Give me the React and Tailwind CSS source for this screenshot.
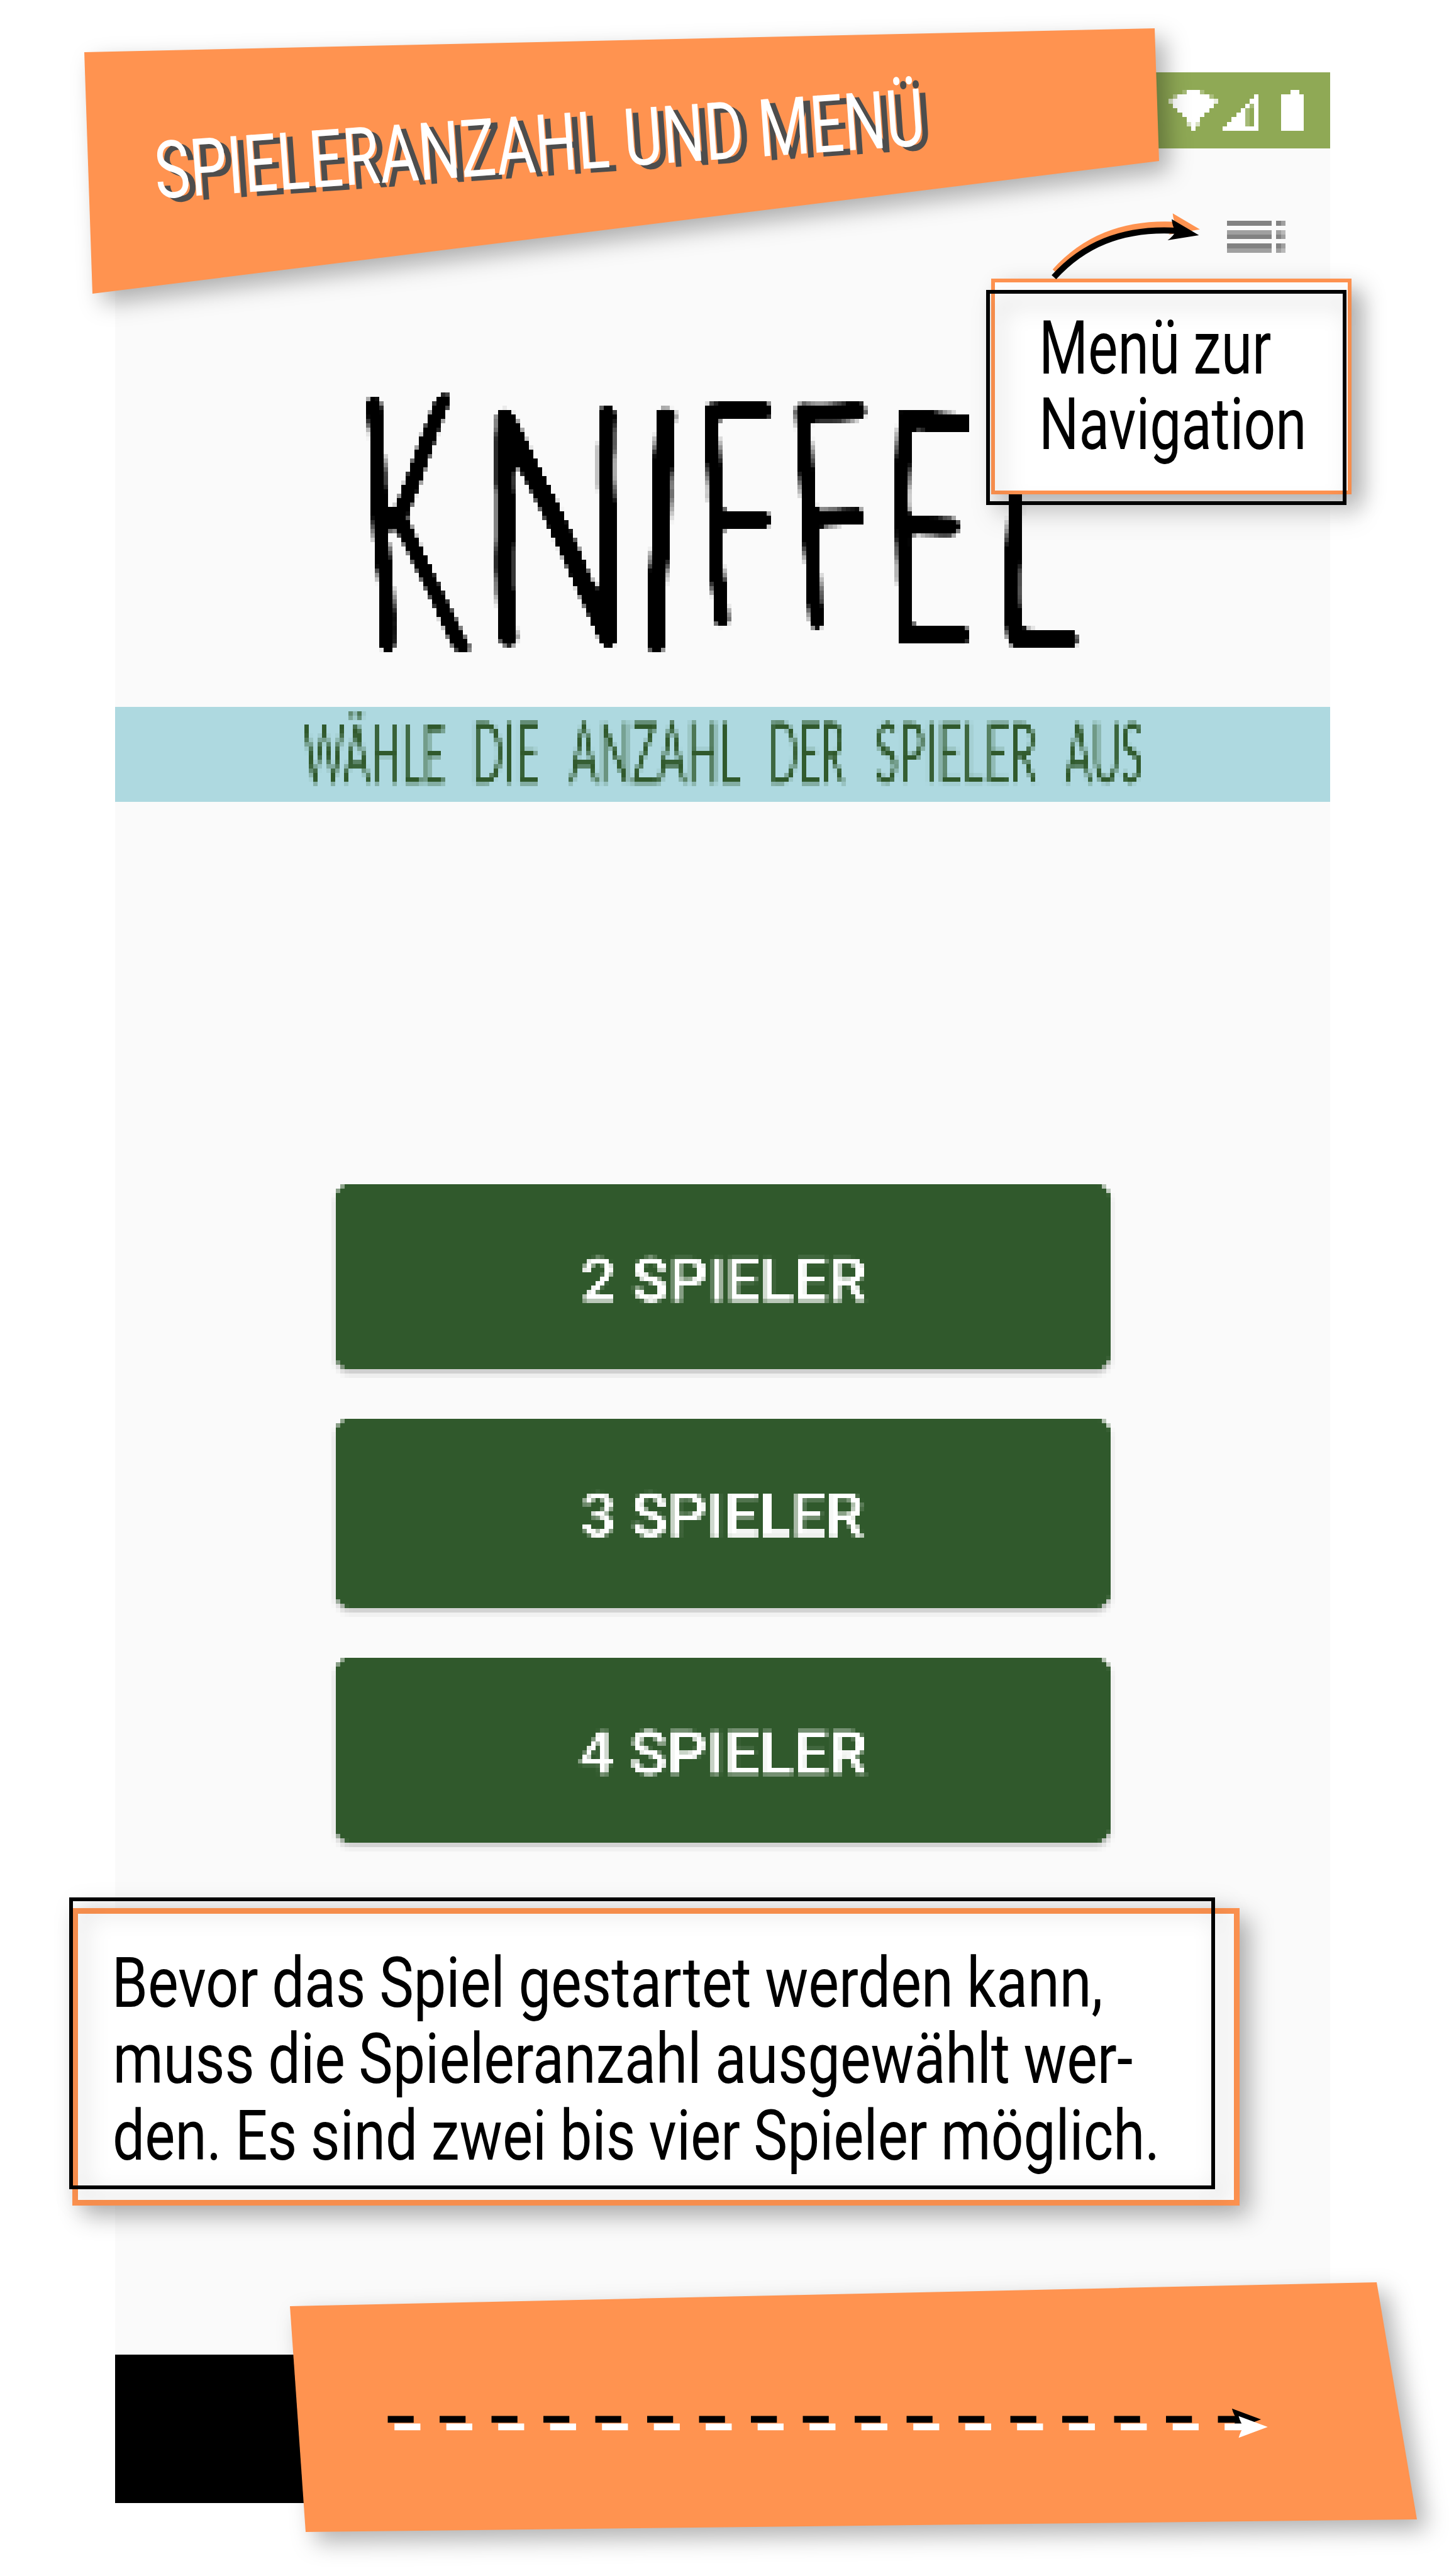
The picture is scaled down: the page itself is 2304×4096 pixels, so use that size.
import { useLayoutEffect, useRef } from "react";

// One line of text whose ink is stretched to fill its box exactly.
function FitText({ children, className = "", textClass = "" }) {
  const box = useRef(null);
  const line = useRef(null);

  useLayoutEffect(() => {
    const el = line.current;
    const style = getComputedStyle(el);
    const size = parseFloat(style.fontSize);
    const ctx = document.createElement("canvas").getContext("2d");
    ctx.font = `${style.fontWeight} ${style.fontSize} ${style.fontFamily}`;
    ctx.wordSpacing = style.wordSpacing;
    const m = ctx.measureText(children);
    const ascent = m.fontBoundingBoxAscent;
    const descent = m.fontBoundingBoxDescent;
    const baseline = (size - ascent - descent) / 2 + ascent;
    const sx = box.current.offsetWidth / (m.actualBoundingBoxLeft + m.actualBoundingBoxRight);
    const sy = box.current.offsetHeight / (m.actualBoundingBoxAscent + m.actualBoundingBoxDescent);
    const tx = m.actualBoundingBoxLeft * sx;
    const ty = (m.actualBoundingBoxAscent - baseline) * sy;
    el.style.transform = `matrix(${sx}, 0, 0, ${sy}, ${tx}, ${ty})`;
  }, [children]);

  return (
    <span ref={box} className={`block shrink-0 ${className}`}>
      <span
        ref={line}
        className={`block w-max origin-top-left whitespace-pre leading-none ${textClass}`}
      >
        {children}
      </span>
    </span>
  );
}

// Filters for the low-resolution phone screen: "pixels" samples the element on
// a 7px grid, "marker" also makes the strokes wavy and rounds off their ends.
function ScreenFilters() {
  return (
    <svg className="absolute h-0 w-0" aria-hidden="true">
      <defs>
        <filter id="pixels" colorInterpolationFilters="sRGB">
          <feGaussianBlur in="SourceGraphic" stdDeviation="1" result="soft" />
          <feFlood x="3" y="3" width="1" height="1" floodColor="#000" />
          <feOffset x="0" y="0" width="7" height="7" dx="0" dy="0" />
          <feTile result="grid" />
          <feComposite in="soft" in2="grid" operator="in" />
          <feMorphology operator="dilate" radius="3" />
        </filter>
        <filter id="marker" colorInterpolationFilters="sRGB">
          <feTurbulence type="fractalNoise" baseFrequency="0.006" numOctaves="1" seed="4" result="noise" />
          <feDisplacementMap in="SourceGraphic" in2="noise" scale="22" xChannelSelector="R" yChannelSelector="G" />
          <feGaussianBlur stdDeviation="6" />
          <feComponentTransfer result="round">
            <feFuncA type="linear" slope="5" intercept="-1.7" />
          </feComponentTransfer>
          <feFlood x="3" y="3" width="1" height="1" floodColor="#000" />
          <feOffset x="0" y="0" width="7" height="7" dx="0" dy="0" />
          <feTile result="grid" />
          <feComposite in="round" in2="grid" operator="in" />
          <feMorphology operator="dilate" radius="3" />
        </filter>
      </defs>
    </svg>
  );
}

const white = [
  // wifi
  [4, 0, 3, 1], [2, 1, 7, 1], [1, 2, 9, 2], [2, 4, 7, 1], [3, 5, 5, 1], [4, 6, 3, 1], [5, 7, 1, 2],
  // signal
  [19, 1, 1, 8], [18, 2, 1, 1], [17, 3, 1, 1], [16, 4, 1, 4], [15, 5, 1, 3], [14, 6, 1, 2], [13, 7, 1, 1], [12, 8, 7, 1],
  // battery
  [27, 0, 2, 1], [25, 1, 5, 8],
];
const faint = [
  [3, 0, 1, 1, 0.2], [7, 0, 1, 1, 0.25], [1, 1, 1, 1, 0.35], [9, 1, 1, 1, 0.25], [0, 2, 1, 1, 0.65], [10, 2, 1, 1, 0.8],
  [4, 7, 1, 1, 0.65], [6, 7, 1, 1, 0.65], [18, 3, 1, 1, 0.2], [17, 4, 1, 4, 0.2],
];

function StatusIcons() {
  return (
    <svg className="h-[65px] w-[215px]" viewBox="0 0 30 9" preserveAspectRatio="none" shapeRendering="crispEdges" fill="#fff">
      {white.map(([x, y, w, h]) => (
        <rect key={`${x}-${y}`} x={x} y={y} width={w} height={h} />
      ))}
      {faint.map(([x, y, w, h, o]) => (
        <rect key={`${x}-${y}`} x={x} y={y} width={w} height={h} opacity={o} />
      ))}
    </svg>
  );
}

function MenuIcon() {
  const rows = [
    [0, 10, 0],
    [19.4, 9.3, 1],
    [28.7, 9.4, 0],
    [46.9, 10, 0],
    [56.9, 9.2, 1],
  ];
  const shades = ["#828282", "#a0a0a0", "#b9b9b9"];
  return (
    <svg className="h-[51px] w-[93px]" viewBox="0 0 121.1 66.1" preserveAspectRatio="none" shapeRendering="crispEdges">
      {rows.map(([y, h, s]) => (
        <g key={y}>
          <rect x="0" y={y} width="93" height={h} fill={shades[s]} />
          <rect x="102.2" y={y} width="9.5" height={h} fill={shades[s]} />
          <rect x="111.7" y={y} width="9.4" height={h} fill={shades[s + 1]} />
        </g>
      ))}
    </svg>
  );
}

const letters = [
  { c: "K", cls: "w-[144px] h-[407px] origin-top skew-x-[3.5deg]" },
  { c: "N", cls: "ml-[71px] mt-[22px] w-[177px] h-[378px]" },
  { c: "I", cls: "ml-[53px] mt-[22px] w-[28px] h-[385px] origin-bottom skew-x-[-2.2deg]" },
  { c: "F", cls: "ml-[63px] mt-[14px] w-[106px] h-[358px] origin-top skew-x-[3.5deg]" },
  { c: "F", cls: "ml-[43px] mt-[14px] w-[106px] h-[358px] origin-top skew-x-[3.5deg]" },
  { c: "E", cls: "ml-[58px] mt-[28px] w-[106px] h-[372px]" },
  { c: "L", cls: "ml-[66px] mt-[22px] w-[106px] h-[378px]" },
];

const words = [
  { t: "WÄHLE", cls: "w-[222px] h-[115px]" },
  { t: "DIE", cls: "ml-[50px] w-[101px] h-[98px]" },
  { t: "ANZAHL", cls: "ml-[49px] w-[273px] h-[98px]" },
  { t: "DER", cls: "ml-[50px] w-[115px] h-[98px]" },
  { t: "SPIELER", cls: "ml-[50px] w-[256px] h-[98px]" },
  { t: "AUS", cls: "ml-[44px] w-[121px] h-[98px]" },
];

function PlayerButton({ children, className, labelClass }) {
  return (
    <button
      type="button"
      className={`flex w-[1231px] items-center rounded-[22px] bg-[#30592c] text-white shadow-[0_7px_10px_rgba(0,0,0,0.22)] [filter:url(#pixels)] ${className}`}
    >
      <FitText className={labelClass} textClass="font-['Roboto',sans-serif] text-[100px] font-semibold">
        {children}
      </FitText>
    </button>
  );
}

function Phone() {
  return (
    <div className="flex h-[3865px] w-[1932px] flex-col bg-[#fafafa]">
      <div className="flex h-[121px] shrink-0 items-center justify-end bg-[#8fa955] pr-[42px]">
        <StatusIcons />
      </div>
      <div className="flex shrink-0 justify-end pr-[71px] pt-[115px]">
        <MenuIcon />
      </div>
      <h1
        className="mt-[222px] flex h-[407px] shrink-0 items-start pl-[398px] text-black [filter:url(#marker)]"
        aria-label="KNIFFEL"
      >
        {letters.map(({ c, cls }, i) => (
          <FitText
            key={i}
            className={cls}
            textClass={
              c === "I"
                ? "font-['Lato',sans-serif] text-[530px] font-light [-webkit-text-stroke:6px_#000]"
                : "font-['Lato',sans-serif] text-[530px] font-light [-webkit-text-stroke:6px_#000] [text-shadow:10px_0_0_#000,-10px_0_0_#000]"
            }
          >
            {c}
          </FitText>
        ))}
      </h1>
      <div className="mt-[93px] flex h-[151px] shrink-0 bg-[#aed9e0] text-[#30592c]">
        <div className="flex w-full items-end pb-[29px] pl-[300px] [filter:url(#pixels)]">
          {words.map(({ t, cls }) => (
            <FitText key={t} className={cls} textClass="font-['Lato',sans-serif] text-[136px] font-normal">
              {t}
            </FitText>
          ))}
        </div>
      </div>
      <div className="mt-[608px] flex flex-col pl-[351px]">
        <PlayerButton className="h-[294px]" labelClass="ml-[393px] mt-[7px] h-[72px] w-[450px]">
          2 SPIELER
        </PlayerButton>
        <PlayerButton className="mt-[79px] h-[300px]" labelClass="ml-[393px] mt-[4px] h-[71px] w-[446px]">
          3 SPIELER
        </PlayerButton>
        <PlayerButton className="mt-[80px] h-[293px]" labelClass="ml-[388px] mt-[6px] h-[72px] w-[456px]">
          4 SPIELER
        </PlayerButton>
      </div>
      <div className="mt-auto h-[236px] shrink-0 bg-black" />
    </div>
  );
}

function TitleBanner() {
  return (
    <header className="absolute left-[134px] top-[45px] h-[422px] w-[1709px] drop-shadow-[16px_16px_18px_rgba(0,0,0,0.3)]">
      <div className="h-full w-full bg-[#ff9350] pl-[118px] pt-[159px] [clip-path:polygon(0px_38px,1702px_0px,1709px_211px,13px_422px)]">
        <FitText
          className="h-[113px] w-[1218px] origin-bottom-left rotate-[-3.98deg] text-white"
          textClass="font-['Roboto',sans-serif] text-[124px] font-normal [text-shadow:14px_7px_0_#4d4d4d]"
        >
          SPIELERANZAHL UND MENÜ
        </FitText>
      </div>
    </header>
  );
}

function CurvedArrow() {
  const shape = (
    <>
      <path d="M2182 574C2240 510 2320 470 2440 478" fill="none" strokeWidth="12.6" />
      <path d="M2482.3 486.9L2426 453.8Q2427 468 2434 479Q2429 489 2417.4 497.5Z" stroke="none" />
    </>
  );
  return (
    <svg className="absolute left-[1667px] top-[338px] h-[108px] w-[246px]" viewBox="2170.6 440.1 320.3 140.6">
      <g stroke="#ff9350" fill="#ff9350" transform="translate(2 -12)">{shape}</g>
      <g stroke="#000" fill="#000">{shape}</g>
    </svg>
  );
}

const calloutText = "font-['Roboto',sans-serif] text-[114px] font-normal [word-spacing:-1.5px]";

function MenuCallout() {
  return (
    <aside className="absolute left-[1568px] top-[443px] h-[360px] w-[581px] text-black">
      <div className="ml-[8px] h-[343px] w-[573px] border-[6px] border-[#ff9350] bg-white pl-[77px] pt-[60px] shadow-[16px_16px_36px_rgba(0,0,0,0.3)]">
        <FitText className="h-[86px] w-[361px]" textClass={calloutText}>Menü zur</FitText>
        <FitText className="mt-[36px] h-[107px] w-[413px]" textClass={calloutText}>Navigation</FitText>
      </div>
      <div className="absolute left-0 top-[18px] h-[342px] w-[573px] border-[6px] border-black drop-shadow-[16px_16px_18px_rgba(0,0,0,0.3)]" />
    </aside>
  );
}

function PlayersCallout() {
  return (
    <aside className="absolute left-[110px] top-[3017px] h-[490px] w-[1861px] pl-[5px] pt-[17px] text-black">
      <div className="h-[473px] w-[1856px] border-[9px] border-[#ff9350] bg-white pl-[59px] pt-[64px] shadow-[16px_16px_36px_rgba(0,0,0,0.3)]">
        <FitText className="ml-[2px] h-[107px] w-[1565px]" textClass={calloutText}>
          Bevor das Spiel gestartet werden kann,
        </FitText>
        <FitText className="ml-[2px] mt-[14px] h-[107px] w-[1615px]" textClass={calloutText}>
          muss die Spieleranzahl ausgewählt wer-
        </FitText>
        <FitText className="mt-[15px] h-[107px] w-[1654px]" textClass={calloutText}>
          den. Es sind zwei bis vier Spieler möglich.
        </FitText>
      </div>
      <div className="absolute left-0 top-0 h-[464px] w-[1822px] border-[6px] border-black drop-shadow-[16px_16px_18px_rgba(0,0,0,0.3)]" />
    </aside>
  );
}

function DashedArrow() {
  const shape = (
    <>
      <path d="M802.7 5009.3H2574" strokeWidth="14" strokeDasharray="53.7 53.72" fill="none" />
      <path d="M2610.7 5009.5L2550.5 4987Q2554 5000 2561 5009.5Q2554 5019 2550.5 5032Z" stroke="none" />
    </>
  );
  return (
    <svg className="h-[49px] w-[1402px]" viewBox="802 4986 1825.5 63.8">
      <g stroke="#000" fill="#000">{shape}</g>
      <g stroke="#fff" fill="#fff" transform="translate(13.9 15.6)">{shape}</g>
    </svg>
  );
}

function NextBanner() {
  return (
    <footer className="absolute left-[461px] top-[3629px] h-[397px] w-[1792px] drop-shadow-[16px_16px_18px_rgba(0,0,0,0.3)]">
      <div className="h-full w-full bg-[#ff9350] pl-[155px] pt-[200px] [clip-path:polygon(0px_38px,1728px_0px,1792px_377px,25px_397px)]">
        <DashedArrow />
      </div>
    </footer>
  );
}

export default function App() {
  return (
    <main className="relative h-[4096px] w-[2304px] overflow-hidden bg-white pl-[183px] pt-[115px]">
      <ScreenFilters />
      <Phone />
      <TitleBanner />
      <MenuCallout />
      <CurvedArrow />
      <PlayersCallout />
      <NextBanner />
    </main>
  );
}
